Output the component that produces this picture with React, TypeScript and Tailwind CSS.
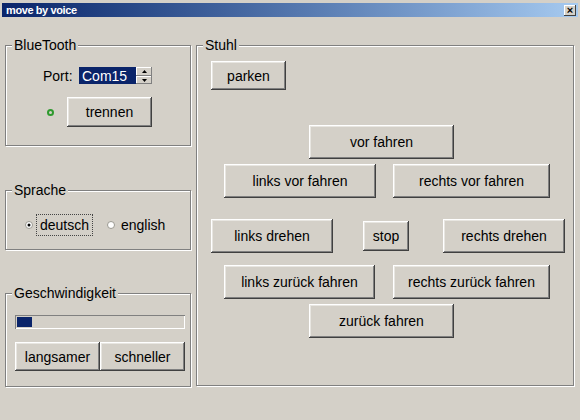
import type { ReactNode } from 'react';

// classic 3D raised button
function Btn({ children, className = '' }: { children: ReactNode; className?: string }) {
  return (
    <button
      type="button"
      className={`flex items-center justify-center bg-[#d4d0c8] text-[14px] text-black leading-none shadow-[inset_-1px_-1px_0_#404040,inset_1px_1px_0_#ffffff,inset_-2px_-2px_0_#808080,inset_2px_2px_0_#e8e6e1] ${className}`}
    >
      {children}
    </button>
  );
}

// etched group box with legend sitting on the top border
function Group({ title, className = '', children }: { title: string; className?: string; children?: ReactNode }) {
  return (
    <div className={`relative border border-[#808080] shadow-[inset_1px_1px_0_#ffffff,1px_1px_0_#ffffff] ${className}`}>
      <span className="absolute left-[6px] top-[-9px] bg-[#d4d0c8] px-[2px] text-[14px] leading-[16px] text-black">
        {title}
      </span>
      {children}
    </div>
  );
}

function Radio({ checked }: { checked?: boolean }) {
  return (
    <svg width="8" height="8" viewBox="0 0 8 8" className="shrink-0">
      <circle cx="4" cy="4" r="3.5" fill="#ffffff" stroke="#9a9890" strokeWidth="1" />
      {checked && <circle cx="4" cy="4" r="1.5" fill="#000000" />}
    </svg>
  );
}

export default function App() {
  return (
    <div className="w-[580px] h-[420px] overflow-hidden bg-[#d4d0c8] font-['Liberation_Sans',Arial,sans-serif] text-black flex flex-col">
      {/* title bar */}
      <div className="mt-[3px] mx-[2px] h-[14px] flex items-center bg-gradient-to-r from-[#0a246a] to-[#a6caf0]">
        <span className="ml-[4px] text-[11px] font-bold tracking-[-0.4px] text-white leading-none">move by voice</span>
        <div className="ml-auto mr-[2px] w-[12px] h-[11px] flex items-center justify-center bg-[#d4d0c8] shadow-[inset_-1px_-1px_0_#404040,inset_1px_1px_0_#ffffff] text-[11px] font-bold leading-none">
          ×
        </div>
      </div>

      <div className="mt-[28px] ml-[5px] flex gap-[5px]">
        {/* left column */}
        <div className="w-[186px] flex flex-col">
          <Group title="BlueTooth" className="h-[101px]">
            <div className="mt-[21px] pl-[37px] flex items-center h-[17px]">
              <span className="w-[36px] text-[14px] leading-none">Port:</span>
              <div className="w-[57px] h-[17px] bg-[#0a246a] text-white text-[14px] leading-none flex items-center pl-[3px]">
                Com15
              </div>
              <div className="w-[16px] h-[17px] flex flex-col">
                <div className="h-[9px] flex items-center justify-center bg-[#d4d0c8] shadow-[inset_-1px_-1px_0_#808080,inset_1px_1px_0_#ffffff]">
                  <svg width="5" height="3" viewBox="0 0 5 3"><path d="M2.5 0 L5 3 L0 3 Z" fill="#000" /></svg>
                </div>
                <div className="h-[8px] flex items-center justify-center bg-[#d4d0c8] shadow-[inset_-1px_-1px_0_#808080,inset_1px_1px_0_#ffffff]">
                  <svg width="5" height="3" viewBox="0 0 5 3"><path d="M0 0 L5 0 L2.5 3 Z" fill="#000" /></svg>
                </div>
              </div>
            </div>
            <div className="mt-[13px] pl-[41px] flex items-center">
              <span className="w-[7px] h-[7px] rounded-full border-2 border-[#2e9a2e]" />
              <Btn className="ml-[13px] w-[85px] h-[30px]">trennen</Btn>
            </div>
          </Group>

          <Group title="Sprache" className="mt-[44px] h-[60px]">
            <div className="mt-[23px] pl-[19px] flex items-center">
              <Radio checked />
              <span className="ml-[3px] h-[22px] w-[57px] flex items-center justify-center border border-dotted border-[#444] text-[14px] leading-none">
                deutsch
              </span>
              <span className="ml-[14px]">
                <Radio />
              </span>
              <span className="ml-[6px] text-[14px] leading-none">english</span>
            </div>
          </Group>

          <Group title="Geschwindigkeit" className="mt-[43px] h-[94px]">
            <div className="mt-[21px] ml-[9px] w-[170px] h-[14px] p-[2px] bg-[#d4d0c8] shadow-[inset_1px_1px_0_#808080,inset_-1px_-1px_0_#ffffff]">
              <div className="w-[15px] h-full bg-[#0a246a]" />
            </div>
            <div className="mt-[13px] ml-[9px] flex">
              <Btn className="w-[85px] h-[29px]">langsamer</Btn>
              <Btn className="w-[85px] h-[29px]">schneller</Btn>
            </div>
          </Group>
        </div>

        {/* chair controls */}
        <Group title="Stuhl" className="w-[378px] h-[341px]">
          <div className="mt-[15px] ml-[14px] flex">
            <Btn className="w-[75px] h-[29px]">parken</Btn>
          </div>
          <div className="mt-[35px] ml-[112px] flex">
            <Btn className="w-[145px] h-[34px]">vor fahren</Btn>
          </div>
          <div className="mt-[5px] ml-[27px] flex gap-[17px]">
            <Btn className="w-[152px] h-[34px]">links vor fahren</Btn>
            <Btn className="w-[157px] h-[34px]">rechts vor fahren</Btn>
          </div>
          <div className="mt-[21px] ml-[14px] flex items-center">
            <Btn className="w-[122px] h-[34px]">links drehen</Btn>
            <Btn className="ml-[30px] w-[46px] h-[30px]">stop</Btn>
            <Btn className="ml-[34px] w-[122px] h-[34px]">rechts drehen</Btn>
          </div>
          <div className="mt-[12px] ml-[27px] flex gap-[18px]">
            <Btn className="w-[151px] h-[34px]">links zurück fahren</Btn>
            <Btn className="w-[157px] h-[34px]">rechts zurück fahren</Btn>
          </div>
          <div className="mt-[5px] ml-[112px] flex">
            <Btn className="w-[145px] h-[34px]">zurück fahren</Btn>
          </div>
        </Group>
      </div>
    </div>
  );
}
